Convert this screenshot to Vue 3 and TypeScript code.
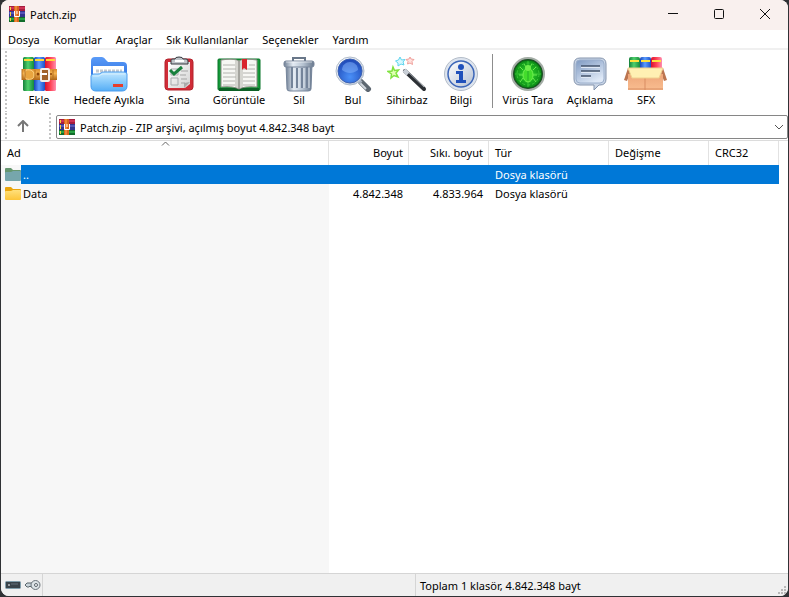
<script setup lang="ts">
import { ref } from 'vue'

interface Tool {
  id: string
  label: string
  size: string
}

interface Entry {
  name: string
  size: string
  packed: string
  type: string
  modified: string
  crc: string
}

const menus: string[] = ['Dosya', 'Komutlar', 'Araçlar', 'Sık Kullanılanlar', 'Seçenekler', 'Yardım']

const toolGroups: Tool[][] = [
  [
    { id: 'add', label: 'Ekle', size: 'small' },
    { id: 'extract', label: 'Hedefe Ayıkla', size: 'huge' },
    { id: 'test', label: 'Sına', size: 'small' },
    { id: 'view', label: 'Görüntüle', size: 'large' },
    { id: 'delete', label: 'Sil', size: 'small' },
    { id: 'find', label: 'Bul', size: 'small' },
    { id: 'wizard', label: 'Sihirbaz', size: 'small' },
    { id: 'info', label: 'Bilgi', size: 'small' },
  ],
  [
    { id: 'virus', label: 'Virüs Tara', size: 'large' },
    { id: 'comment', label: 'Açıklama', size: 'medium' },
    { id: 'sfx', label: 'SFX', size: 'small' },
  ],
]

const entries: Entry[] = [
  { name: '..', size: '', packed: '', type: 'Dosya klasörü', modified: '', crc: '' },
  { name: 'Data', size: '4.842.348', packed: '4.833.964', type: 'Dosya klasörü', modified: '', crc: '' },
]

const selected = ref(0)
</script>

<template>
  <div class="window">
    <svg class="defs" width="0" height="0" aria-hidden="true">
      <defs>
        <linearGradient id="gGreen"><stop offset="0" stop-color="#15803a" /><stop offset=".45" stop-color="#4fd06c" /><stop offset="1" stop-color="#168a3c" /></linearGradient>
        <linearGradient id="gBlue"><stop offset="0" stop-color="#1746b8" /><stop offset=".45" stop-color="#5a9cff" /><stop offset="1" stop-color="#1c50c8" /></linearGradient>
        <linearGradient id="gRed"><stop offset="0" stop-color="#d5122f" /><stop offset=".5" stop-color="#ff4356" /><stop offset="1" stop-color="#ff8fb0" /></linearGradient>
        <linearGradient id="gBelt" x2="0" y2="1"><stop offset="0" stop-color="#d98a2a" /><stop offset=".4" stop-color="#f7b552" /><stop offset="1" stop-color="#ae6416" /></linearGradient>
        <linearGradient id="gFolderBack" x2="0" y2="1"><stop offset="0" stop-color="#5a9bf8" /><stop offset="1" stop-color="#1c5fd6" /></linearGradient>
        <linearGradient id="gFolderFront" x2="0" y2="1"><stop offset="0" stop-color="#c4e8ff" /><stop offset=".45" stop-color="#8fcefc" /><stop offset="1" stop-color="#55adf5" /></linearGradient>
        <linearGradient id="gMetal"><stop offset="0" stop-color="#6f7f94" /><stop offset=".3" stop-color="#e4ebf3" /><stop offset=".65" stop-color="#b3c0cf" /><stop offset="1" stop-color="#68788d" /></linearGradient>
        <linearGradient id="gPaper" x2="1" y2="1"><stop offset="0" stop-color="#ffffff" /><stop offset="1" stop-color="#d3d3d3" /></linearGradient>
        <radialGradient id="gLens" cx=".5" cy=".75" r=".75"><stop offset="0" stop-color="#4a90f8" /><stop offset="1" stop-color="#1d46b4" /></radialGradient>
        <linearGradient id="gSilver" x2="1" y2="1"><stop offset="0" stop-color="#ffffff" /><stop offset="1" stop-color="#b4c0d3" /></linearGradient>
        <radialGradient id="gRadar"><stop offset="0" stop-color="#32dc2c" /><stop offset="1" stop-color="#0b8a16" /></radialGradient>
        <linearGradient id="gBubble" x2=".6" y2="1"><stop offset="0" stop-color="#7f9ac2" /><stop offset="1" stop-color="#dfe9f7" /></linearGradient>
        <linearGradient id="gBox" x2="0" y2="1"><stop offset="0" stop-color="#eea679" /><stop offset="1" stop-color="#f9bd90" /></linearGradient>
        <linearGradient id="gFold" x2="0" y2="1"><stop offset="0" stop-color="#ffe07c" /><stop offset="1" stop-color="#fcc53a" /></linearGradient>
        <symbol id="archive" viewBox="0 0 16 16">
          <rect width="16" height="5" fill="#a51d3f" /><rect y="1" width="16" height="2" fill="#ce3154" />
          <rect y="5" width="16" height="6" fill="#34358f" /><rect y="6" width="16" height="2" fill="#5555b8" />
          <rect y="11" width="16" height="5" fill="#126c2b" /><rect y="12" width="16" height="2" fill="#27a144" />
          <path d="M1 1h1v3H1zM1 6h1v4H1zM1 12h1v3H1z" fill="#f5d23c" />
          <rect x="5" width="5" height="16" fill="#d7671b" /><rect x="6" width="2" height="16" fill="#f08536" />
          <path d="M5.500 5v5.500h5V5M8 5v3" fill="none" stroke="#fff" />
        </symbol>
      </defs>
    </svg>

    <header class="titlebar">
      <svg class="icon16" aria-hidden="true"><use href="#archive" /></svg>
      <h1>Patch.zip</h1>
      <div class="controls">
        <button type="button" aria-label="Simge durumuna küçült"><svg width="12" height="12"><path d="M1 5.500h10" /></svg></button>
        <button type="button" aria-label="Ekranı kapla"><svg width="12" height="12"><rect x="1.500" y="1.500" width="9" height="9" rx="1" /></svg></button>
        <button type="button" aria-label="Kapat"><svg width="12" height="12"><path d="M1 1l10 10M11 1L1 11" /></svg></button>
      </div>
    </header>

    <nav class="menubar">
      <button v-for="menu in menus" :key="menu" type="button">{{ menu }}</button>
    </nav>

    <div class="toolbar">
      <span class="grip"></span>
      <div v-for="(group, index) in toolGroups" :key="index" class="group">
        <button v-for="tool in group" :key="tool.id" type="button" class="tool" :class="tool.size">
          <svg v-if="tool.id === 'add'" width="36" height="36" viewBox="0 0 36 36">
            <rect x="2" y="1" width="11" height="34" rx="1.500" fill="url(#gGreen)" />
            <rect x="13" y="1" width="11" height="34" rx="1.500" fill="url(#gBlue)" />
            <rect x="24" y="1" width="11" height="34" rx="1.500" fill="url(#gRed)" />
            <path d="M3 3h9v2H3zM14 3h9v2h-9zM25 3h9v2h-9z" fill="#ffd936" />
            <path d="M1 13h35v11H1z" fill="url(#gBelt)" />
            <path d="M5 14c5-1 8 1 8 5s-3 5-8 4c-2-3-2-6 0-9z" fill="#e9a540" stroke="#ffd98a" />
            <path d="M1 13v11M4 14v9M14 14v9M32 14v9" stroke="#b5701f" />
            <circle cx="17" cy="18" r="1.500" fill="#8c4307" /><circle cx="30" cy="18" r="1" fill="#8c4307" />
            <rect x="20" y="13" width="8" height="12" rx="1" fill="#a0622a" stroke="#f3efe8" stroke-width="2" />
            <path d="M19 18h7" stroke="#fff" stroke-width="2" />
          </svg>
          <svg v-else-if="tool.id === 'extract'" width="38" height="36" viewBox="0 0 38 36">
            <path d="M1 31V5q0-4 4-4h7q2 0 4 3l2 2h15q4 0 4 4v21z" fill="url(#gFolderBack)" />
            <path d="M3 10h31v10H3z" fill="#fff" />
            <path d="M6 15h26" stroke="#c2c8cf" stroke-width="3" stroke-dasharray="3 1" />
            <path d="M1 20q0-2 3-2h4q2 0 3-1t3-1h20q3 0 3 2v12q0 5-5 5H6q-5 0-5-5z" fill="url(#gFolderFront)" stroke="#4c9dee" />
            <path d="M3 20h6q2-2 4-2h22" fill="none" stroke="#e3f5ff" opacity=".7" />
            <rect x="23" y="28" width="10" height="3" fill="#e63e2c" />
          </svg>
          <svg v-else-if="tool.id === 'test'" width="30" height="36" viewBox="0 0 30 36">
            <rect x="1" y="3" width="28" height="31" rx="3" fill="#d02c37" stroke="#b3222d" />
            <path d="M4 6h22v22l-5 4H4z" fill="url(#gPaper)" /><path d="M26 26l-6 6v-5z" fill="#aaa" />
            <path d="M7 4q0-1 2-1h2q0-2 4-2t4 2h3q2 0 2 2v3H7z" fill="#bfc4c9" stroke="#34393f" />
            <path d="M11 5h9" stroke="#fff" stroke-width="2" />
            <path d="M7 13h7v6H7zM7 22h7v7H7z" fill="none" stroke="#a7aaad" />
            <path d="M6 14l4 4 8-7" fill="none" stroke="#18803d" stroke-width="3" />
            <path d="M17 15h7M16 19h6M17 23h6M17 27h4" stroke="#a5a5a5" />
          </svg>
          <svg v-else-if="tool.id === 'view'" width="44" height="36" viewBox="0 0 44 36">
            <rect x="1" y="3" width="42" height="31" rx="1" fill="#159a39" stroke="#087529" />
            <path d="M2 32h40v3H2z" fill="#0c6126" />
            <path d="M4 4q13-2 18 1 5-3 18-1v27q-13-1-18 2-5-3-18-2z" fill="#f7f7f4" stroke="#8a8a82" />
            <path d="M18 4l4 1 4-1v27l-4 2-4-2z" fill="#c6c6c1" opacity=".7" /><path d="M22 5v28" stroke="#74746e" />
            <path d="M6 9h12M6 13h13M6 17h12M6 21h13M6 25h12M6 29h12M32 9h6M26 13h12M26 17h12M26 21h12M26 25h12M26 29h12" stroke="#b4b4b0" />
            <path d="M25 3h5v11l-3-2-2 2z" fill="#d9232d" />
          </svg>
          <svg v-else-if="tool.id === 'delete'" width="32" height="36" viewBox="0 0 32 36">
            <path d="M3 8h26l-1 25q0 2-3 2H7q-3 0-3-2z" fill="url(#gMetal)" stroke="#75859b" />
            <path d="M9 11v21M14 12v20M19 12v20M24 11v21" stroke="#74849a" stroke-width="2" />
            <path d="M11 12v20M16 12v20M21 12v20M26 11v21" stroke="#e6edf5" />
            <path d="M10 5V2h12v3" fill="none" stroke="#697789" stroke-width="2" />
            <rect x="1" y="5" width="30" height="6" rx="2" fill="url(#gMetal)" stroke="#78869b" />
            <path d="M3 6h26" stroke="#fff" opacity=".6" />
          </svg>
          <svg v-else-if="tool.id === 'find'" width="38" height="36" viewBox="0 0 38 36">
            <path d="M27 26l7 7" stroke="#5d6771" stroke-width="6" stroke-linecap="round" />
            <path d="M26 27l6 6" stroke="#d0d6dd" stroke-width="2" /><path d="M24 24l3 3" stroke="#a3adba" stroke-width="4" />
            <circle cx="16" cy="15" r="14" fill="url(#gSilver)" stroke="#b0bccb" />
            <circle cx="16" cy="15" r="12" fill="url(#gLens)" stroke="#3c62b4" />
            <path d="M8 14c0-5 4-8 8-8s8 3 8 8c-5 4-11 4-16 0z" fill="#8cb9ff" opacity=".48" />
          </svg>
          <svg v-else-if="tool.id === 'wizard'" width="40" height="36" viewBox="0 0 40 36">
            <path d="M18 15l19 18" stroke="#2c3035" stroke-width="4" stroke-linecap="round" />
            <path d="M18 13l19 18" stroke="#a3a9b0" />
            <path d="M17 14l4 4" stroke="#c9cfd7" stroke-width="4" />
            <path d="M6 11l1.500 3.500 4-.5-2.500 3 2 4-4-1.500L4 22l.5-4L1 15.500l4-.5z" fill="#e1ffb4" stroke="#7fe23f" stroke-width="1.500" />
            <path d="M13 1l1.500 3 3.500-.5L16 6l1 3-3-1-3 2v-3L8.500 5l3-1z" fill="#d8f8ff" stroke="#5fd5ee" />
            <path d="M23 1l1 2 3 .5-2 2 .5 3-2.500-1.500L20.500 8l.5-2.500-2-2 3-.5z" fill="#ffe1de" stroke="#f0a19c" />
          </svg>
          <svg v-else-if="tool.id === 'info'" width="36" height="36" viewBox="0 0 36 36">
            <circle cx="18" cy="18" r="16.500" fill="#dde4ee" stroke="#b4bdc9" />
            <circle cx="18" cy="18" r="13" fill="url(#gSilver)" stroke="#3c66b8" stroke-width="1.500" />
            <circle cx="18" cy="11" r="3" fill="#1f50bb" />
            <path d="M13 15h7v9h3v3H13v-3h3v-6h-3z" fill="#1f50bb" />
          </svg>
          <svg v-else-if="tool.id === 'virus'" width="36" height="36" viewBox="0 0 36 36">
            <circle cx="18" cy="18" r="16" fill="#2a4a30" stroke="#a4ada6" stroke-width="2" />
            <circle cx="18" cy="18" r="14" fill="url(#gRadar)" stroke="#0e5d18" />
            <path d="M18 5v26M5 18h26" stroke="#55e048" opacity=".6" />
            <circle cx="18" cy="18" r="11" fill="none" stroke="#3bc638" stroke-dasharray="3 2" />
            <path d="M13 14l-3-3M23 14l3-3M13 19h-4M23 19h4M13 22l-3 4M23 22l3 4M16 11l-2-3M20 11l2-3" stroke="#69ec4c" />
            <ellipse cx="18" cy="19" rx="5" ry="7" fill="#43dd2c" stroke="#72f050" /><circle cx="18" cy="12" r="3" fill="#6fec4b" />
            <path d="M18 15v10" stroke="#25ad26" />
          </svg>
          <svg v-else-if="tool.id === 'comment'" width="34" height="36" viewBox="0 0 34 36">
            <path d="M7 2h20q6 0 6 6v15q0 6-6 6h-1l-5 5v-5H7q-6 0-6-6V8q0-6 6-6z" fill="#c8d4e5" stroke="#8494ad" />
            <rect x="3" y="4" width="28" height="23" rx="4" fill="url(#gBubble)" stroke="#9aaecb" />
            <path d="M8 11h19M8 16h19M8 21h10" stroke="#dfe8f5" stroke-width="2" /><path d="M8 10h19M8 15h19M8 20h10" stroke="#42516b" stroke-width="1.500" />
          </svg>
          <svg v-else width="44" height="36" viewBox="0 0 44 36">
            <rect x="5" y="1" width="11" height="17" rx="2" fill="url(#gGreen)" /><rect x="16" y="1" width="11" height="17" rx="2" fill="url(#gBlue)" /><rect x="27" y="1" width="11" height="17" rx="2" fill="url(#gRed)" />
            <path d="M6 4h9v2H6zM17 4h9v2h-9zM28 4h9v2h-9z" fill="#ffe23c" />
            <path d="M4 12L0 24l3 1 3-8zM39 12l4 12-3 1-3-8z" fill="#bc7550" />
            <path d="M4 18h35v16H4z" fill="url(#gBox)" /><path d="M21 20v14M4 33h35" stroke="#d98d62" />
            <path d="M4 12h35l-4 10H8z" fill="#fff0b3" stroke="#f0d08f" />
          </svg>
          <span>{{ tool.label }}</span>
        </button>
      </div>
    </div>

    <div class="addressbar">
      <span class="grip"></span>
      <button type="button" class="up" aria-label="Bir üst klasör"><svg width="12" height="12"><path d="M6 12V2M1 6l5-5 5 5" /></svg></button>
      <span class="grip"></span>
      <div class="path">
        <svg class="icon16" aria-hidden="true"><use href="#archive" /></svg>
        <select aria-label="Arşiv yolu"><option>Patch.zip - ZIP arşivi, açılmış boyut 4.842.348 bayt</option></select>
        <svg class="chevron" width="10" height="6" aria-hidden="true"><path d="M1 1l4 4 4-4" /></svg>
      </div>
    </div>

    <main class="listing">
      <table>
        <colgroup><col class="c-name" /><col class="c-num" /><col class="c-num" /><col class="c-type" /><col class="c-date" /><col class="c-crc" /></colgroup>
        <thead>
          <tr>
            <th scope="col" class="sorted" aria-sort="ascending">Ad<svg class="caret" width="9" height="5"><path d="M1 4.500l3.500-3.500L8 4.500" /></svg></th>
            <th scope="col" class="num">Boyut</th>
            <th scope="col" class="num">Sıkı. boyut</th>
            <th scope="col">Tür</th>
            <th scope="col">Değişme</th>
            <th scope="col">CRC32</th>
          </tr>
        </thead>
        <tbody>
          <tr v-for="(entry, index) in entries" :key="entry.name" :class="{ selected: index === selected }" @click="selected = index">
            <td class="name">
              <div>
                <svg width="16" height="13" viewBox="0 0 16 13" aria-hidden="true">
                  <path class="tab" d="M0 12V1q0-1 1-1h5l2 2h7q1 0 1 1v9z" />
                  <path class="front" d="M0 5q0-1 1-1h5l2-1h7q1 0 1 1v8q0 1-1 1H1q-1 0-1-1z" />
                </svg>
                <span>{{ entry.name }}</span>
              </div>
            </td>
            <td class="num">{{ entry.size }}</td>
            <td class="num">{{ entry.packed }}</td>
            <td>{{ entry.type }}</td>
            <td>{{ entry.modified }}</td>
            <td>{{ entry.crc }}</td>
          </tr>
        </tbody>
      </table>
    </main>

    <footer class="statusbar">
      <div class="marks">
        <svg width="16" height="10" aria-hidden="true"><rect x=".5" y="1.500" width="15" height="7" rx="1" fill="#39434a" stroke="#819eac" /><path d="M3 5h2" stroke="#fff" /><path d="M6 4h7" stroke="#65717a" /></svg>
        <svg width="17" height="12" aria-hidden="true"><path d="M8 4H3L1 6l2 2h2l1-1 1 1h3" fill="#c9d4da" stroke="#59646b" /><circle cx="11.500" cy="6" r="4.500" fill="#dce3e6" stroke="#697379" /><circle cx="12" cy="6" r="1.500" fill="#fff" stroke="#59646b" /></svg>
      </div>
      <div class="pane"></div>
      <div class="pane">Toplam 1 klasör, 4.842.348 bayt</div>
      <svg class="resize" width="9" height="9" aria-hidden="true"><path d="M6 0h2v2H6zM3 3h2v2H3zM6 3h2v2H6zM0 6h2v2H0zM3 6h2v2H3zM6 6h2v2H6z" fill="#b8b8b8" /></svg>
    </footer>
  </div>
</template>

<style>
body {
  background: #303235;
}
</style>

<style scoped>
.window {
  --name-width: 328px;
  display: flex;
  flex-direction: column;
  box-sizing: border-box;
  min-height: calc(100vh - 1px);
  margin: 0 1px 1px;
  overflow: hidden;
  border-radius: 8px;
  background: #fff;
  color: #000;
  font: 11px/16px "Noto Sans", "Open Sans", sans-serif;
}
.defs {
  position: absolute;
}
button,
select {
  margin: 0;
  padding: 0;
  border: 0;
  background: none;
  color: inherit;
  font: inherit;
}
.icon16 {
  flex: none;
  width: 16px;
  height: 16px;
}
.titlebar {
  display: flex;
  align-items: center;
  height: 30px;
  padding-left: 8px;
  gap: 5px;
  background: #f9f0ee;
}
.titlebar .icon16 {
  margin-bottom: 2px;
}
h1 {
  margin: 0;
  font-size: 11px;
  font-weight: 400;
}
.controls {
  display: flex;
  height: 28px;
  margin: 0 0 2px auto;
}
.controls button {
  display: grid;
  place-items: center;
  width: 46px;
}
.controls svg,
.up svg,
.chevron path,
.caret path {
  fill: none;
  stroke: #111;
}
.menubar {
  display: flex;
  height: 18px;
  padding-left: 7px;
  gap: 14px;
  border-bottom: 2px solid #f0f0f0;
}
.menubar button {
  padding-top: 2px;
}
.toolbar {
  display: flex;
  height: 62px;
  padding-left: 4px;
}
.grip {
  flex: none;
  width: 2px;
  margin-top: 1px;
  background: repeating-linear-gradient(#c4c4c4 0 2px, transparent 2px 4px);
}
.group {
  display: flex;
  padding-left: 5px;
}
.group + .group {
  position: relative;
  padding-left: 7px;
}
.group + .group::before {
  content: "";
  position: absolute;
  top: 4px;
  left: 4px;
  width: 1px;
  height: 54px;
  background: #8d8d8d;
}
.tool {
  display: flex;
  flex-direction: column;
  align-items: center;
  padding-top: 6px;
  white-space: nowrap;
}
.tool svg {
  flex: none;
}
.small { width: 54px; }
.medium { width: 58px; }
.large { width: 66px; }
.huge { width: 86px; }
.addressbar {
  display: flex;
  height: 28px;
  padding-left: 4px;
  border-bottom: 1px solid #dcdcdc;
}
.up {
  display: grid;
  place-items: center;
  width: 32px;
  margin-right: 10px;
}
.up svg {
  stroke: #777;
  stroke-width: 2px;
}
.path {
  display: grid;
  flex: 1;
  grid-template-columns: 24px 1fr 20px;
  align-items: center;
  box-sizing: border-box;
  height: 24px;
  margin: 3px 0 0 5px;
  border: 1px solid #868686;
  border-radius: 2px;
}
.path .icon16 {
  grid-area: 1 / 1;
  margin-left: 2px;
}
.path select {
  grid-area: 1 / 1 / 2 / 4;
  width: 100%;
  height: 22px;
  padding: 1px 0 0 23px;
  appearance: none;
}
.chevron {
  grid-area: 1 / 3;
  margin-left: 7px;
  pointer-events: none;
}
.chevron path {
  stroke: #555;
}
.listing {
  flex: 1;
  background: linear-gradient(#f7f7f7, #f7f7f7) 0 24px / var(--name-width) 100% no-repeat;
}
table {
  width: 778px;
  table-layout: fixed;
  border-spacing: 0;
}
.c-name { width: var(--name-width); }
.c-num { width: 80px; }
.c-type { width: 120px; }
.c-date { width: 100px; }
.c-crc { width: 70px; }
th,
td {
  padding: 0 6px;
  text-align: left;
  font-weight: 400;
  white-space: nowrap;
}
th {
  height: 24px;
  border-right: 1px solid #e2e2e2;
}
th.num {
  padding-right: 5px;
}
td {
  height: 19px;
}
.num {
  text-align: right;
}
.sorted {
  position: relative;
}
.caret {
  position: absolute;
  top: 0;
  left: 50%;
  margin-left: -4px;
}
.caret path {
  stroke: #666;
}
.name {
  padding: 0;
}
.name div {
  display: flex;
  align-items: center;
  padding-left: 4px;
}
.name span {
  flex: 1;
  padding-left: 2px;
  line-height: 19px;
}
.tab { fill: #eaa50d; }
.front { fill: url(#gFold); }
.selected .tab { fill: #65966f; }
.selected .front { fill: #76a6ac; }
.selected td:not(.name),
.selected .name span {
  background: #0078d7;
  color: #fff;
}
.statusbar {
  display: flex;
  height: 22px;
  border-top: 1px solid #d5d5d5;
  background: #f0f0f0;
}
.marks {
  display: flex;
  align-items: center;
  width: 37px;
  padding-left: 4px;
  gap: 3px;
}
.marks svg {
  flex: none;
}
.pane {
  flex: 1;
  padding: 4px 0 0 4px;
  border-left: 1px solid #d5d5d5;
}
.resize {
  position: absolute;
  right: 2px;
  bottom: 2px;
}
</style>
